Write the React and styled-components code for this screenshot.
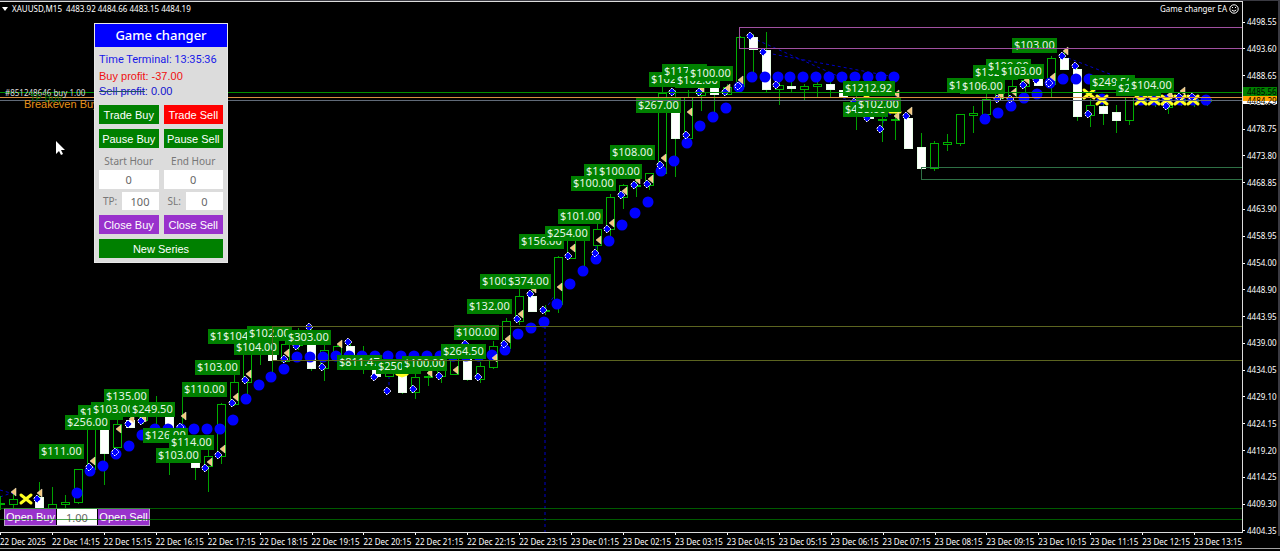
import React, { useState } from "react";
import styled, { createGlobalStyle } from "styled-components";

const GlobalStyle = createGlobalStyle`
  * {
    box-sizing: border-box;
  }

  body {
    margin: 0;
    background: #000;
    font-family: "Liberation Sans", Arial, sans-serif;
  }
`;

const uiFont = `"Noto Sans", "DejaVu Sans", sans-serif`;

const Terminal = styled.main`
  display: grid;
  grid-template-columns: minmax(0, 1fr) 37px;
  grid-template-rows: minmax(0, 1fr) 16px;
  height: 100vh;
  padding-bottom: 2px;
  overflow: hidden;
  border-top: 1px solid #3a3a42;
  background: #000;
  color: #fff;
`;

const ChartArea = styled.section`
  position: relative;
  min-width: 0;
  overflow: hidden;
  border: 1px solid #dcdcdc;
  border-left: none;
`;

const Canvas = styled.svg`
  display: block;
  width: 100%;
  height: 100%;
`;

const Overlay = styled(Canvas)`
  position: absolute;
  inset: 0;
  pointer-events: none;
`;

const ChartHeader = styled.header`
  position: absolute;
  top: 0;
  left: 0;
  right: 0;
  display: flex;
  align-items: center;
  justify-content: space-between;
  height: 14px;
  padding: 0 3px 0 2px;
  font: 8px/14px ${uiFont};
  white-space: pre;
`;

const HeaderItem = styled.span`
  display: flex;
  align-items: center;
  gap: ${(props) => props.$gap}px;
`;

const Panel = styled.aside`
  position: absolute;
  top: 21px;
  left: 94px;
  width: 134px;
  border: 1px solid #e8e8e8;
  background: #dcdcdc;
`;

const PanelTitle = styled.h1`
  margin: 0;
  background: #0000ff;
  color: #fff;
  font: 500 13px/23px ${uiFont};
  text-align: center;
`;

const PanelBody = styled.div`
  display: flex;
  flex-direction: column;
  gap: 5px;
  padding: 4px;
`;

const Stats = styled.div`
  display: flex;
  flex-direction: column;
  padding-bottom: 1px;
`;

const Stat = styled.div`
  color: ${(props) => props.$color};
  font-size: 11px;
  line-height: 15px;
  white-space: nowrap;
`;

const TimeStat = styled(Stat)`
  font-family: Roboto, "Noto Sans", sans-serif;
  line-height: 18px;
`;

const Struck = styled.span`
  text-decoration: line-through 1px #205060;
`;

const Row = styled.div`
  display: grid;
  grid-template-columns: repeat(${(props) => props.$columns || 2}, minmax(0, 1fr));
  gap: 5px;
`;

const Button = styled.button`
  height: ${(props) => props.$height || 19}px;
  padding: 0;
  border: none;
  background: ${(props) => props.$bg || "#008000"};
  color: #fff;
  font: 11px "Liberation Sans", Arial, sans-serif;
  white-space: nowrap;
  cursor: pointer;
`;

const Field = styled.label`
  display: flex;
  flex-direction: column;
  color: #777;
  font: 10px/17px ${uiFont};
  text-align: center;
`;

const InlineField = styled(Field)`
  flex-direction: row;
  align-items: center;
  justify-content: space-between;
  padding-left: 4px;
`;

const Input = styled.input`
  width: ${(props) => props.$width || "100%"};
  height: ${(props) => props.$height || 19}px;
  padding: 0;
  border: none;
  border-radius: 0;
  background: #fff;
  color: #666;
  font: 11px ${uiFont};
  text-align: center;
`;

const HourRow = styled(Row)`
  margin-bottom: -2px;
`;

const OrderBar = styled.form`
  position: absolute;
  bottom: 6px;
  left: 4px;
  display: grid;
  grid-template-columns: 51px 40px 51px;
  gap: 1px;
  border: 1px solid #b8a0c8;
`;

const PriceAxis = styled.aside`
  position: relative;
  display: flex;
  flex-direction: column;
  justify-content: space-between;
  padding-top: 16px;
  margin-bottom: -3px;
  border-right: 2px solid #3a3a42;
  font: 8px/10px ${uiFont};
`;

const Price = styled.span`
  display: flex;
  align-items: center;
  gap: 2px;

  &::before {
    content: "";
    width: 2px;
    height: 1px;
    background: #fff;
  }
`;

const PriceBadges = styled.div`
  position: absolute;
  top: 86px;
  left: 0;
  width: 34px;
  color: #000;
`;

const PriceBadge = styled.div`
  height: ${(props) => props.$height}px;
  padding-left: 4px;
  background: ${(props) => props.$bg};
  line-height: 9px;
`;

const TimeAxis = styled.footer`
  grid-column: 1 / -1;
  border-bottom: 1px solid #a0a0a0;
  overflow: hidden;
`;

const TimeList = styled.div`
  display: grid;
  grid-template-columns: repeat(24, minmax(0, 1fr));
  margin-right: 34px;
  font: 8px/13px ${uiFont};
  white-space: nowrap;
`;

const Time = styled.span`
  &::before {
    content: "";
    display: block;
    width: 1px;
    height: 2px;
    background: #fff;
  }
`;

const STEP = 12.975;

// index, high, body top, body bottom, low, filled
const candles = [
  [0, 496, 503, 504, 510],
  [1, 494, 499, 504, 508],
  [3, 482, 497, 508, 508, true],
  [4, 487, 504, 508, 508],
  [5, 495, 502, 504, 508],
  [6, 469, 469, 502, 504],
  [7, 425, 425, 469, 469],
  [8, 425, 425, 453, 485, true],
  [9, 417, 424, 447, 450],
  [10, 415, 420, 427, 427, true],
  [11, 403, 408, 420, 424],
  [12, 396, 404, 405, 430],
  [13, 405, 410, 428, 475, true],
  [14, 384, 428, 429, 430],
  [15, 440, 450, 467, 480, true],
  [16, 448, 456, 466, 492],
  [17, 403, 404, 456, 464],
  [18, 374, 382, 404, 406],
  [19, 352, 352, 382, 400],
  [20, 340, 345, 346, 365],
  [21, 330, 345, 360, 376, true],
  [22, 340, 344, 361, 362],
  [23, 328, 335, 345, 350],
  [24, 327, 341, 368, 371, true],
  [25, 345, 350, 368, 381],
  [26, 345, 346, 358, 360],
  [27, 342, 346, 355, 358, true],
  [28, 346, 355, 356, 374],
  [29, 352, 362, 376, 377, true],
  [30, 360, 368, 376, 377],
  [31, 368, 374, 392, 394, true],
  [32, 374, 377, 392, 399],
  [33, 368, 376, 377, 386],
  [34, 360, 364, 376, 383],
  [35, 352, 356, 374, 374],
  [36, 344, 350, 379, 381, true],
  [37, 362, 366, 379, 383],
  [38, 341, 346, 367, 369],
  [39, 318, 321, 348, 350],
  [40, 289, 296, 321, 325],
  [41, 290, 296, 311, 311, true],
  [42, 305, 310, 311, 315],
  [43, 256, 257, 304, 313],
  [44, 240, 240, 258, 258],
  [45, 236, 236, 237, 270],
  [46, 222, 229, 245, 252],
  [47, 194, 197, 229, 237],
  [48, 184, 185, 197, 209],
  [49, 180, 185, 186, 197],
  [50, 173, 173, 185, 190],
  [51, 86, 93, 173, 173],
  [52, 90, 98, 138, 177, true],
  [53, 90, 97, 138, 139],
  [54, 85, 92, 95, 111],
  [55, 84, 87, 94, 116, true],
  [56, 84, 87, 94, 95],
  [57, 36, 37, 86, 87],
  [58, 34, 37, 49, 72, true],
  [59, 32, 50, 89, 92, true],
  [60, 80, 85, 89, 105],
  [61, 80, 86, 88, 92, true],
  [62, 84, 86, 89, 101],
  [63, 82, 84, 86, 97],
  [64, 80, 84, 89, 98, true],
  [65, 86, 90, 97, 98, true],
  [66, 90, 103, 104, 130],
  [67, 100, 115, 118, 119, true],
  [68, 112, 119, 120, 142],
  [69, 112, 119, 120, 140],
  [70, 115, 118, 148, 149, true],
  [71, 133, 147, 168, 168, true],
  [72, 141, 143, 168, 171],
  [73, 134, 142, 144, 151],
  [74, 114, 114, 143, 146],
  [75, 106, 113, 115, 133],
  [76, 92, 99, 114, 115],
  [77, 88, 90, 98, 100],
  [78, 78, 86, 97, 98],
  [79, 76, 80, 86, 94],
  [80, 74, 76, 85, 86, true],
  [81, 56, 58, 84, 98],
  [82, 50, 58, 69, 70, true],
  [83, 68, 69, 116, 121, true],
  [84, 99, 105, 115, 127],
  [85, 102, 106, 113, 125, true],
  [86, 105, 112, 120, 133, true],
  [87, 97, 97, 120, 125],
  [88, 96, 99, 101, 105],
  [89, 96, 99, 101, 107],
  [90, 96, 105, 107, 114],
  [91, 96, 99, 101, 106],
  [92, 96, 99, 101, 107],
  [93, 96, 99, 101, 106],
];

// trailing average, keyed by candle index
const dots = [
  [6, 493], [7, 471], [8, 466], [9, 454], [10, 446], [11, 435],
  [12, 429], [13, 429], [14, 429], [15, 429], [16, 429], [17, 429],
  [18, 420], [19, 399], [20, 385], [21, 377], [22, 369],
  [23, 357], [24, 357], [25, 357], [26, 356], [27, 356], [28, 356],
  [29, 356], [30, 356], [31, 356], [32, 356], [33, 356], [34, 356],
  [35, 356], [36, 356], [37, 356], [38, 355], [39, 350], [40, 334],
  [41, 328], [42, 322], [43, 304], [44, 284], [45, 271], [46, 259],
  [47, 241], [48, 225], [49, 213], [50, 202], [51, 171], [52, 161],
  [53, 143], [54, 126], [55, 117], [56, 108], [57, 87],
  [58, 77], [59, 77], [60, 77], [61, 77], [62, 77], [63, 77],
  [64, 77], [65, 77], [66, 77], [67, 77], [68, 77], [69, 77],
  [76, 119], [77, 113], [78, 106], [79, 98], [80, 94], [81, 83],
  [82, 79], [83, 79], [84, 79], [85, 99], [88, 100], [89, 100],
  [90, 100], [91, 100], [92, 100], [93, 100],
];

const entries = [
  [37, 499], [89, 467], [115, 452], [128, 424], [141, 421], [180, 427],
  [205, 468], [218, 455], [232, 403], [245, 380], [284, 359], [296, 346],
  [309, 327], [322, 367], [348, 342], [374, 377], [387, 391], [413, 389],
  [439, 376], [465, 344], [478, 377], [504, 344], [517, 319], [530, 294],
  [543, 310], [568, 256], [595, 253], [607, 229], [621, 195], [634, 185],
  [647, 184], [660, 165], [672, 92], [686, 135], [699, 92], [725, 92],
  [738, 86], [750, 36], [763, 52], [776, 85], [854, 102], [867, 118],
  [880, 129], [906, 116], [997, 99], [1010, 99], [1023, 85], [1036, 80],
  [1049, 83], [1062, 56], [1075, 66], [1088, 114], [1166, 106], [1179, 97],
  [1192, 97],
];

const exits = [
  [14, 492], [40, 493], [93, 461], [119, 429], [132, 419], [144, 418],
  [184, 416], [210, 462], [223, 449], [236, 397], [249, 374], [287, 353],
  [340, 344], [430, 373], [456, 370], [495, 358], [508, 339], [521, 314],
  [534, 289], [560, 287], [573, 248], [599, 240], [612, 223], [625, 191],
  [638, 180], [651, 179], [664, 158], [690, 112], [702, 89], [728, 88],
  [741, 80], [897, 94], [897, 116], [910, 111], [1001, 95], [1014, 92],
  [1027, 80], [1053, 77], [1066, 51], [1170, 95], [1183, 91],
];

const crosses = [
  [26, 499], [1089, 94], [1102, 100], [1141, 100], [1154, 100],
  [1167, 100], [1180, 100], [1193, 100],
];

const tags = [
  [39, 451, "$111.00"],
  [78, 412, "$100.00"],
  [65, 422, "$256.00"],
  [91, 409, "$103.00"],
  [130, 409, "$249.50"],
  [104, 396, "$135.00"],
  [143, 435, "$126.00"],
  [169, 442, "$114.00"],
  [156, 455, "$103.00"],
  [182, 389, "$110.00"],
  [195, 367, "$103.00"],
  [208, 336, "$100.00"],
  [221, 336, "$104.00"],
  [234, 347, "$104.00"],
  [247, 333, "$102.00"],
  [286, 337, "$303.00"],
  [337, 362, "$811.47"],
  [376, 366, "$250.00"],
  [402, 363, "$100.00"],
  [441, 351, "$264.50"],
  [454, 332, "$100.00"],
  [467, 306, "$132.00"],
  [480, 281, "$100.00"],
  [506, 281, "$374.00"],
  [519, 241, "$156.00"],
  [545, 233, "$254.00"],
  [558, 216, "$101.00"],
  [584, 171, "$100.00"],
  [571, 183, "$100.00"],
  [597, 171, "$100.00"],
  [610, 152, "$108.00"],
  [636, 105, "$267.00"],
  [649, 79, "$102.00"],
  [662, 71, "$117.00"],
  [675, 80, "$102.00"],
  [688, 73, "$100.00"],
  [843, 109, "$435.00"],
  [843, 88, "$1212.92"],
  [856, 104, "$102.00"],
  [947, 85, "$100.00"],
  [973, 72, "$102.00"],
  [960, 86, "$106.00"],
  [986, 66, "$100.00"],
  [999, 71, "$103.00"],
  [1012, 45, "$103.00"],
  [1090, 82, "$249.50"],
  [1116, 88, "$200.00"],
  [1129, 85, "$104.00"],
];

const prices = Array.from({ length: 20 }, (_, i) =>
  (4498.55 - i * 4.95 - (i > 9 ? 0.15 : 0)).toFixed(2)
);

const times = Array.from({ length: 24 }, (_, i) => {
  if (i === 0) return "22 Dec 2025";
  const hour = 13 + i;
  // the market is closed for an hour around midnight
  if (hour < 24) return `22 Dec ${hour}:15`;
  return `23 Dec ${String(hour - 23).padStart(2, "0")}:15`;
});

const PlotText = styled.text`
  fill: ${(props) => props.$fill};
  font-family: ${(props) => props.$family || uiFont};
  font-size: ${(props) => props.$size || 11}px;
`;

function Candle({ data }) {
  const [index, high, top, bottom, low, filled] = data;
  const x = Math.round(index * STEP);
  return (
    <g stroke="#00a000" shapeRendering="crispEdges">
      <path d={`M${x + 0.5} ${high}V${top}M${x + 0.5} ${bottom}V${low}`} />
      <rect
        x={x - 3.5}
        y={top + 0.5}
        width="8"
        height={Math.max(bottom - top, 1)}
        fill={filled ? "#fff" : "#000"}
        stroke={filled ? "#e8ffe8" : "#00b000"}
      />
    </g>
  );
}

function Tag({ x, y, text }) {
  return (
    <g>
      <rect x={x} y={y - 7} width={text.length > 7 ? 52 : 45} height="15" fill="#008000" />
      <PlotText x={x + 2} y={y + 4} $fill="#e6f5e6">
        {text}
      </PlotText>
    </g>
  );
}

function Chart() {
  return (
    <Canvas role="img" aria-label="XAUUSD M15 chart">
      <g transform="translate(0 -2)">
        <g fill="none" stroke="#0000c8" strokeDasharray="3 3">
          <path d="M757 40L840 77M767 53L895 77M545 326V532" />
          <path d="M0 490L14 494M0 497L14 492M545 310L560 287M596 255V240M661 165V93M687 135V112" />
          <path d="M1068 58L1120 78M843 98L895 116M880 129L897 94M389 391V370M1088 79L1100 99" />
        </g>
        {candles.map((item) => (
          <Candle key={item[0]} data={item} />
        ))}
        {dots.map(([index, y]) => (
          <circle key={index} cx={Math.round(index * STEP) - 1} cy={y} r="5.5" fill="#0000ff" />
        ))}
        <g fill="none" stroke="#ffff20" strokeWidth="3" strokeLinecap="round">
          {crosses.map(([x, y]) => (
            <path key={x} d={`M${x - 5} ${y - 4}L${x + 5} ${y + 4}M${x + 5} ${y - 4}L${x - 5} ${y + 4}`} />
          ))}
          <path d="M397 374L402 376L407 374M890 112L900 112M865 96H868" />
        </g>
        {exits.map(([x, y]) => (
          <path key={`${x}-${y}`} d={`M${x - 3} ${y}L${x + 2} ${y - 4}V${y + 4}Z`} fill="#f4c77c" stroke="#fff2d0" strokeWidth=".5" />
        ))}
        {entries.map(([x, y]) => (
          <path
            key={x}
            d={`M${x - 3} ${y - 1}L${x} ${y - 4}L${x + 4} ${y}L${x} ${y + 4}L${x - 3} ${y + 1}Z`}
            fill="#0000ff"
            stroke="#fff"
            strokeDasharray="2 1"
          />
        ))}
        {tags.map(([x, y, text]) => (
          <Tag key={`${x}-${y}`} x={x} y={y} text={text} />
        ))}
        <g fill="none" shapeRendering="crispEdges">
          <path d="M4000 27.5H739.5V48.5H4000" stroke="#a050a0" />
          <path d="M4000 167.5H921.5V179.5H4000" stroke="#2e7045" />
          <path d="M4000 326.5H272.5V360.5H4000" stroke="#5c6420" />
          <path d="M0 100.5H4000" stroke="#606a78" />
          <path d="M0 97.5H4000" stroke="#d89040" />
          <path d="M0 92.5H4000" stroke="#009000" />
        </g>
        <PlotText x="5" y="96" $fill="#ddd" $size={8}>
          #851248646 buy 1.00
        </PlotText>
        <PlotText x="30" y="102" $fill="#086808" $size={10}>
          TP Buy
        </PlotText>
        <PlotText x="24" y="108" $fill="#e89018" $family="Liberation Sans">
          Breakeven Buy
        </PlotText>
        <path d="M56 141V154L59 151L61 155L63 154L61 150H65Z" fill="#fff" />
      </g>
    </Canvas>
  );
}

function ControlPanel() {
  const [settings, setSettings] = useState({ start: "0", end: "0", tp: "100", sl: "0" });
  const bind = (name) => ({
    name,
    value: settings[name],
    onChange: (e) => setSettings({ ...settings, [name]: e.target.value }),
  });

  return (
    <Panel>
      <PanelTitle>Game changer</PanelTitle>
      <PanelBody>
        <Stats>
          <TimeStat $color="#1818e8">Time Terminal: 13:35:36</TimeStat>
          <Stat $color="#f01010">Buy profit: -37.00</Stat>
          <Stat $color="#1010d0">
            <Struck>Sell profit</Struck>: 0.00
          </Stat>
        </Stats>
        <Row>
          <Button>Trade Buy</Button>
          <Button $bg="#ff0000">Trade Sell</Button>
        </Row>
        <Row>
          <Button>Pause Buy</Button>
          <Button>Pause Sell</Button>
        </Row>
        <HourRow>
          <Field>
            Start Hour
            <Input {...bind("start")} />
          </Field>
          <Field>
            End Hour
            <Input {...bind("end")} />
          </Field>
        </HourRow>
        <Row>
          <InlineField>
            TP:
            <Input $width="37px" $height={18} {...bind("tp")} />
          </InlineField>
          <InlineField>
            SL:
            <Input $width="37px" $height={18} {...bind("sl")} />
          </InlineField>
        </Row>
        <Row>
          <Button $bg="#9932cc">Close Buy</Button>
          <Button $bg="#9932cc">Close Sell</Button>
        </Row>
        <Row $columns={1}>
          <Button>New Series</Button>
        </Row>
      </PanelBody>
    </Panel>
  );
}

function OrderControls() {
  const [lots, setLots] = useState("1.00");

  return (
    <OrderBar onSubmit={(e) => e.preventDefault()}>
      <Button type="button" $bg="#9932cc" $height={16}>
        Open Buy
      </Button>
      <Input aria-label="Lots" $height={16} value={lots} onChange={(e) => setLots(e.target.value)} />
      <Button type="button" $bg="#9932cc" $height={16}>
        Open Sell
      </Button>
    </OrderBar>
  );
}

export default function App() {
  return (
    <>
      <GlobalStyle />
      <Terminal>
        <ChartArea>
          <Chart />
          <ChartHeader>
            <HeaderItem $gap={4}>
              <svg width="6" height="4" viewBox="0 0 6 4">
                <path d="M0 0H6L3 4Z" fill="#fff" />
              </svg>
              {"XAUUSD,M15  4483.92 4484.66 4483.15 4484.19"}
            </HeaderItem>
            <HeaderItem $gap={2}>
              Game changer EA
              <svg width="10" height="10" viewBox="0 0 10 10" fill="none" stroke="#fff">
                <circle cx="5" cy="5" r="4.2" />
                <path d="M3 3.5H4M6 3.5H7M2.8 6Q5 8.5 7.2 6" />
              </svg>
            </HeaderItem>
          </ChartHeader>
          <ControlPanel />
          <OrderControls />
          <Overlay aria-hidden="true">
            <path d="M0 506.5H4000M0 517.5H4000" stroke="#008000" strokeOpacity=".7" shapeRendering="crispEdges" />
          </Overlay>
        </ChartArea>
        <PriceAxis>
          {prices.map((price) => (
            <Price key={price}>{price}</Price>
          ))}
          <PriceBadges>
            <PriceBadge $height={9} $bg="#008000">
              4485.56
            </PriceBadge>
            <PriceBadge $height={5} $bg="#ffa500">
              4484.29
            </PriceBadge>
            <PriceBadge $height={3} $bg="#fff" />
          </PriceBadges>
        </PriceAxis>
        <TimeAxis>
          <TimeList>
            {times.map((time) => (
              <Time key={time}>{time}</Time>
            ))}
          </TimeList>
        </TimeAxis>
      </Terminal>
    </>
  );
}
